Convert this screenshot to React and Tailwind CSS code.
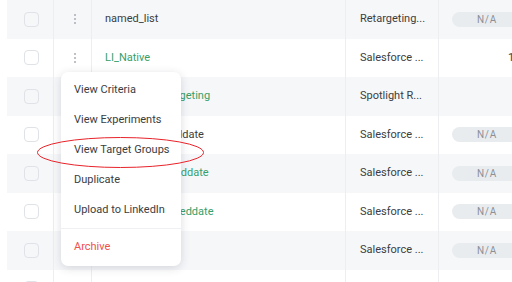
import { useState } from "react";

const rows = [
  { name: "named_list", green: false, source: "Retargeting...", status: "pill" },
  { name: "LI_Native", green: true, source: "Salesforce ...", status: "count" },
  { name: "Spotlight_Retargeting", green: true, source: "Spotlight R...", status: "" },
  { name: "sf_contacts1_lddate", green: false, source: "Salesforce ...", status: "pill" },
  { name: "sf_accounts_1_ddate", green: true, source: "Salesforce ...", status: "pill" },
  { name: "sf_opps_list_seeddate", green: true, source: "Salesforce ...", status: "pill" },
  { name: "sf_test", green: true, source: "Salesforce ...", status: "pill" },
  { name: "", green: false, source: "", status: "" },
];

const menuItems = ["View Criteria", "View Experiments", "View Target Groups", "Duplicate", "Upload to LinkedIn"];

const Kebab = () => (
  <div className="flex flex-col items-center gap-[2px]">
    <span className="h-[2px] w-[2px] rounded-full bg-[#a9adb3]" />
    <span className="h-[2px] w-[2px] rounded-full bg-[#a9adb3]" />
    <span className="h-[2px] w-[2px] rounded-full bg-[#a9adb3]" />
  </div>
);

const App = () => {
  const [openRow] = useState(1);

  return (
    <div className="relative h-[282px] w-[512px] overflow-hidden bg-white font-['Roboto',sans-serif] text-[11px] text-[#3a3d42]">
      <div className="ml-[7px]">
        {rows.map((row, index) => (
          <div key={index} className={`flex h-[38.5px] items-center ${index % 2 === 0 ? "bg-[#f6f7f9]" : "bg-white"}`}>
            <div className="flex h-full w-[46px] shrink-0 items-center pl-[17px]">
              <span className="h-[15px] w-[15px] shrink-0 rounded-[4px] border-[1.5px] border-[#dfe2e6]" />
            </div>
            <div className="flex h-full w-[38px] shrink-0 items-center border-l border-[#eceef1] pl-[20px]">
              {index < 2 && <Kebab />}
            </div>
            <div className="flex h-full w-[254px] shrink-0 items-center border-l border-[#eceef1] pl-[13px]">
              <span className={`whitespace-nowrap ${row.green ? "text-[#35a06a]" : "text-[#3a3d42]"}`}>{row.name}</span>
            </div>
            <div className="flex h-full w-[93px] shrink-0 items-center border-l border-[#eceef1] pl-[14px]">
              <span className="whitespace-nowrap">{row.source}</span>
            </div>
            <div className="flex h-full min-w-0 flex-1 items-center border-l border-[#eceef1] pl-[13px]">
              {row.status === "pill" && (
                <span className="flex h-[15px] w-[70px] shrink-0 items-center justify-center rounded-full bg-[#e9ecef] text-[10px] tracking-[0.08em] text-[#8b9097]">
                  N/A
                </span>
              )}
              {row.status === "count" && <span className="pl-[56px]">1</span>}
            </div>
          </div>
        ))}
      </div>

      {openRow === 1 && (
        <div className="absolute left-[61px] top-[72px] w-[120px] rounded-[7px] bg-white pb-[4px] pt-[3px] shadow-[0_2px_10px_rgba(30,40,60,0.16)]">
          {menuItems.map((item) => (
            <div key={item} className="flex h-[30px] items-center whitespace-nowrap pl-[13px] text-[#3a3d42]">
              {item}
            </div>
          ))}
          <div className="my-[3px] h-px bg-[#eef0f3]" />
          <div className="flex h-[30px] items-center pl-[13px] text-[#f0504c]">Archive</div>
        </div>
      )}

      <svg className="pointer-events-none absolute left-0 top-0" width="512" height="282">
        <ellipse cx="120.5" cy="152.5" rx="83" ry="15" fill="none" stroke="#e8232a" strokeWidth="1" />
      </svg>
    </div>
  );
};

export default App;
